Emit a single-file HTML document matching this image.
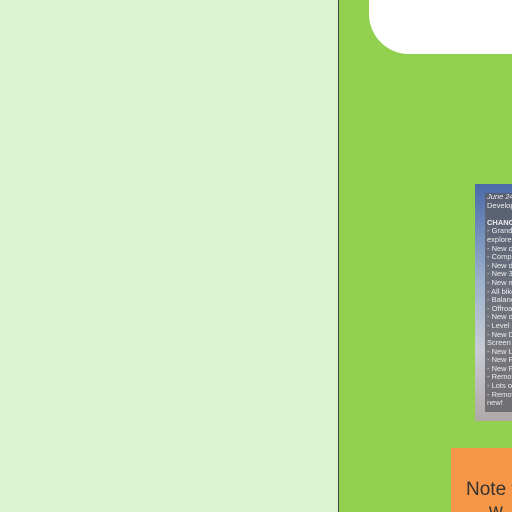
<html style="overflow:hidden;width:512px;height:512px"><head><style>
body{margin:0;width:512px;height:512px;overflow:hidden;position:relative;font-family:"Liberation Sans",sans-serif;background:#92d050}
.l{position:absolute;left:0;top:0;width:338px;height:512px;background:#dcf3d2;border-right:1px solid #444}
.w{position:absolute;left:369px;top:-40px;width:200px;height:94px;background:#fff;border-radius:40px}
.img{position:absolute;left:475px;top:184px;width:37px;height:237px;overflow:hidden;background:linear-gradient(#4a6aa8,#9ab0cc 40%,#c8ccd4 70%,#b0a8a8)}
.t{position:absolute;width:40px;height:219px;background:rgba(90,90,95,.75);color:#eee;font-size:7.5px;line-height:8.6px;white-space:nowrap}
.o{position:absolute;left:451px;top:448px;width:61px;height:64px;overflow:hidden;background:#f79646;color:#333;font-size:19px}
</style></head><body>
<div class="l"></div>
<div class="w"></div>
<div class="img"><div class="t" style="left:10px;top:9px;padding-left:2px"><i>June 24</i><br>Develop<br><br><b>CHANGE</b><br>- Grand<br>explore!<br>- New ch<br>- Comple<br>- New dy<br>- New 3D<br>- New m<br>- All bike<br>- Balanc<br>- Offroa<br>- New ou<br>- Level d<br>- New D<br>Screen<br>- New Le<br>- New R<br>- New Fr<br>- Remov<br>- Lots of<br>- Remov<br>new!</div></div>
<div class="o"><div style="position:absolute;left:15px;top:31px;white-space:nowrap">Note t</div><div style="position:absolute;left:38px;top:53px">w</div></div>
</body></html>
